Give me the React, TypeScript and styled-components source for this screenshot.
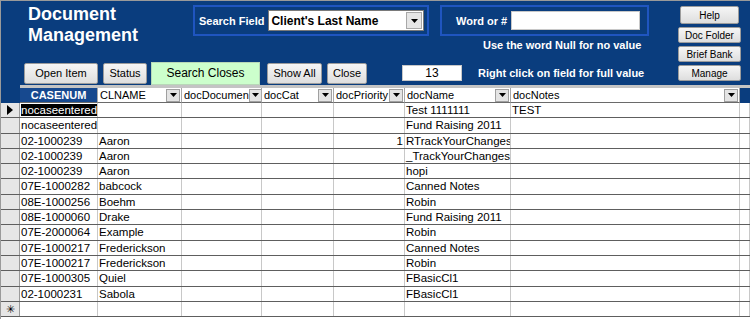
import styled, { createGlobalStyle, css } from 'styled-components';

const GlobalStyle = createGlobalStyle`
  html, body { margin: 0; padding: 0; background: #fff; }
  body { font-family: 'Liberation Sans', Arial, sans-serif; }
`;

const COLS = '19px 78px 84px 80px 72px 71px 106px 229px 1fr';

const Frame = styled.div`
  width: 750px;
  height: 319px;
  box-sizing: border-box;
  border-top: 1px solid #9a9a9a;
  border-left: 1px solid #9a9a9a;
  background: #0a3d7e;
  overflow: hidden;
  display: flex;
  flex-direction: column;
`;

const Header = styled.div`
  height: 84px;
  display: flex;
  flex-shrink: 0;
`;

const LeftArea = styled.div`
  width: 677px;
  display: flex;
  flex-direction: column;
`;

const TopRow = styled.div`
  height: 60px;
  display: flex;
  align-items: flex-start;
`;

const Title = styled.h1`
  box-sizing: border-box;
  width: 192px;
  margin: 3px 0 0;
  padding-left: 27px;
  color: #fff;
  font-size: 18px;
  line-height: 21px;
  font-weight: bold;
`;

const FieldBox = styled.div<{ $w: number; $pad: number }>`
  box-sizing: border-box;
  width: ${(p) => p.$w}px;
  height: 31px;
  margin-top: 4px;
  border: 2px solid #1f55c0;
  display: flex;
  align-items: center;
  padding-left: ${(p) => p.$pad}px;
`;

const Label = styled.span`
  color: #fff;
  font-size: 11px;
  font-weight: bold;
  margin-right: 4px;
  white-space: nowrap;
`;

const Combo = styled.div`
  box-sizing: border-box;
  width: 156px;
  height: 21px;
  background: #fff;
  border: 1px solid #7a7a7a;
  display: flex;
  align-items: center;
  font-size: 12px;
  font-weight: bold;
  color: #000;
`;

const ComboText = styled.span`
  flex: 1;
  padding-left: 2px;
`;

const ComboButton = styled.span`
  box-sizing: border-box;
  width: 16px;
  height: 17px;
  margin-right: 1px;
  background: #e6e6e6;
  border: 1px solid #a8a8a8;
  display: flex;
  align-items: center;
  justify-content: center;
`;

const WordColumn = styled.div`
  margin-left: 11px;
  display: flex;
  flex-direction: column;
`;

const TextInput = styled.div<{ $w: number; $h: number }>`
  box-sizing: border-box;
  width: ${(p) => p.$w}px;
  height: ${(p) => p.$h}px;
  background: #fff;
  border: 1px solid #c8c8c8;
  font-size: 12px;
  line-height: ${(p) => p.$h - 2}px;
  text-align: center;
  color: #000;
`;

const Hint = styled.div<{ $pad?: number; $top?: number }>`
  color: #fff;
  font-size: 11px;
  font-weight: bold;
  white-space: nowrap;
  padding-left: ${(p) => p.$pad ?? 0}px;
  margin-top: ${(p) => p.$top ?? 0}px;
`;

const BottomRow = styled.div`
  height: 24px;
  display: flex;
  align-items: center;
  padding-left: 23px;
`;

const Button = styled.div<{ $w: number; $h?: number; $gap?: number; $green?: boolean; $fs?: number }>`
  box-sizing: border-box;
  width: ${(p) => p.$w}px;
  height: ${(p) => p.$h ?? 21}px;
  margin-right: ${(p) => p.$gap ?? 5}px;
  background: ${(p) => (p.$green ? '#ccffcc' : 'linear-gradient(#f6f6f6, #dedede)')};
  border: 1px solid ${(p) => (p.$green ? '#b8d8b8' : '#9c9c9c')};
  border-radius: ${(p) => (p.$green ? 0 : 2)}px;
  display: flex;
  align-items: center;
  justify-content: center;
  font-size: ${(p) => p.$fs ?? 11}px;
  color: #000;
  white-space: nowrap;
`;

const RightCol = styled.div`
  width: 63px;
  padding-top: 5px;
  display: flex;
  flex-direction: column;
  align-items: center;
  gap: 3px;
`;

const Band = styled.div`
  height: 3px;
  margin-left: 19px;
  background: #c4c4c4;
  flex-shrink: 0;
`;

const gridRow = css`
  display: grid;
  grid-template-columns: ${COLS};
`;

const HeadRow = styled.div`
  ${gridRow};
  height: 15px;
  flex-shrink: 0;
`;

const HeadCell = styled.div<{ $title?: boolean }>`
  box-sizing: border-box;
  display: flex;
  align-items: center;
  overflow: hidden;
  font-size: 11px;
  white-space: nowrap;
  border-right: 1px solid #a8a8a8;
  border-bottom: 1px solid #6a6a6a;
  padding-left: ${(p) => (p.$title ? 0 : 2)}px;
  justify-content: ${(p) => (p.$title ? 'center' : 'space-between')};
  background: ${(p) => (p.$title ? '#17498f' : '#fff')};
  color: ${(p) => (p.$title ? '#fff' : '#000')};
  font-weight: ${(p) => (p.$title ? 'bold' : 'normal')};
`;

const Corner = styled.div``;

const DropButton = styled.span`
  box-sizing: border-box;
  flex-shrink: 0;
  width: 14px;
  height: 13px;
  margin-right: 1px;
  background: #e4e4e4;
  border: 1px solid #a0a0a0;
  display: flex;
  align-items: center;
  justify-content: center;
`;

const Body = styled.div`
  flex: 1;
  background: #fff;
`;

const DataRow = styled.div`
  ${gridRow};
  box-sizing: border-box;
  height: 15.3px;
  border-bottom: 1px solid #5e5e5e;
`;

const Selector = styled.div`
  background: #e6e6e6;
  border-right: 1px solid #9a9a9a;
  display: flex;
  align-items: center;
  justify-content: center;
  font-size: 11px;
  color: #000;
`;

const Cell = styled.div<{ $right?: boolean }>`
  overflow: hidden;
  white-space: nowrap;
  font-size: 11.5px;
  line-height: 14px;
  color: #000;
  padding: 0 1px;
  border-right: 1px solid #c8c8c8;
  text-align: ${(p) => (p.$right ? 'right' : 'left')};
`;

const Selected = styled.span`
  background: #000;
  color: #fff;
`;

const Arrow = () => (
  <svg width="7" height="4" viewBox="0 0 7 4">
    <path d="M0 0h7L3.5 4z" fill="#000" />
  </svg>
);

const RowMarker = () => (
  <svg width="6" height="10" viewBox="0 0 6 10">
    <path d="M0 0l6 5-6 5z" fill="#000" />
  </svg>
);

type Rec = [string, string, string, string, string, string, string];

const rows: Rec[] = [
  ['nocaseentered', '', '', '', '', 'Test 1111111', 'TEST'],
  ['nocaseentered', '', '', '', '', 'Fund Raising 2011', ''],
  ['02-1000239', 'Aaron', '', '', '1', 'RTrackYourChangesBasic', ''],
  ['02-1000239', 'Aaron', '', '', '', '_TrackYourChangesList', ''],
  ['02-1000239', 'Aaron', '', '', '', 'hopi', ''],
  ['07E-1000282', 'babcock', '', '', '', 'Canned Notes', ''],
  ['08E-1000256', 'Boehm', '', '', '', 'Robin', ''],
  ['08E-1000060', 'Drake', '', '', '', 'Fund Raising 2011', ''],
  ['07E-2000064', 'Example', '', '', '', 'Robin', ''],
  ['07E-1000217', 'Frederickson', '', '', '', 'Canned Notes', ''],
  ['07E-1000217', 'Frederickson', '', '', '', 'Robin', ''],
  ['07E-1000305', 'Quiel', '', '', '', 'FBasicCl1', ''],
  ['02-1000231', 'Sabola', '', '', '', 'FBasicCl1', ''],
];

const columns = ['CLNAME', 'docDocumen', 'docCat', 'docPriority', 'docName', 'docNotes'];

export default function App() {
  return (
    <>
      <GlobalStyle />
      <Frame>
        <Header>
          <LeftArea>
            <TopRow>
              <Title>
                Document
                <br />
                Management
              </Title>
              <FieldBox $w={236} $pad={4}>
                <Label>Search Field</Label>
                <Combo>
                  <ComboText>Client's Last Name</ComboText>
                  <ComboButton>
                    <Arrow />
                  </ComboButton>
                </Combo>
              </FieldBox>
              <WordColumn>
                <FieldBox $w={209} $pad={14}>
                  <Label>Word or #</Label>
                  <TextInput $w={129} $h={19} />
                </FieldBox>
                <Hint $pad={43} $top={3}>Use the word Null for no value</Hint>
              </WordColumn>
            </TopRow>
            <BottomRow>
              <Button $w={74}>Open Item</Button>
              <Button $w={44} $gap={4}>Status</Button>
              <Button $w={109} $h={23} $gap={7} $green $fs={12}>
                Search Closes
              </Button>
              <Button $w={55}>Show All</Button>
              <Button $w={40} $gap={35}>Close</Button>
              <TextInput $w={60} $h={16}>13</TextInput>
              <Hint $pad={16}>Right click on field for full value</Hint>
            </BottomRow>
          </LeftArea>
          <RightCol>
            <Button $w={59} $h={18} $gap={0} $fs={10}>Help</Button>
            <Button $w={63} $h={16} $gap={0} $fs={10}>Doc Folder</Button>
            <Button $w={63} $h={16} $gap={0} $fs={10}>Brief Bank</Button>
            <Button $w={63} $h={16} $gap={0} $fs={10}>Manage</Button>
          </RightCol>
        </Header>
        <Band />
        <HeadRow>
          <Corner />
          <HeadCell $title>CASENUM</HeadCell>
          {columns.map((c) => (
            <HeadCell key={c}>
              <span>{c}</span>
              <DropButton>
                <Arrow />
              </DropButton>
            </HeadCell>
          ))}
          <Corner />
        </HeadRow>
        <Body>
          {rows.map((r, i) => (
            <DataRow key={i}>
              <Selector>{i === 0 && <RowMarker />}</Selector>
              <Cell>{i === 0 ? <Selected>{r[0]}</Selected> : r[0]}</Cell>
              <Cell>{r[1]}</Cell>
              <Cell>{r[2]}</Cell>
              <Cell>{r[3]}</Cell>
              <Cell $right>{r[4]}</Cell>
              <Cell>{r[5]}</Cell>
              <Cell>{r[6]}</Cell>
              <Cell />
            </DataRow>
          ))}
          <DataRow>
            <Selector>✳</Selector>
            <Cell />
            <Cell />
            <Cell />
            <Cell />
            <Cell />
            <Cell />
            <Cell />
            <Cell />
          </DataRow>
        </Body>
      </Frame>
    </>
  );
}
